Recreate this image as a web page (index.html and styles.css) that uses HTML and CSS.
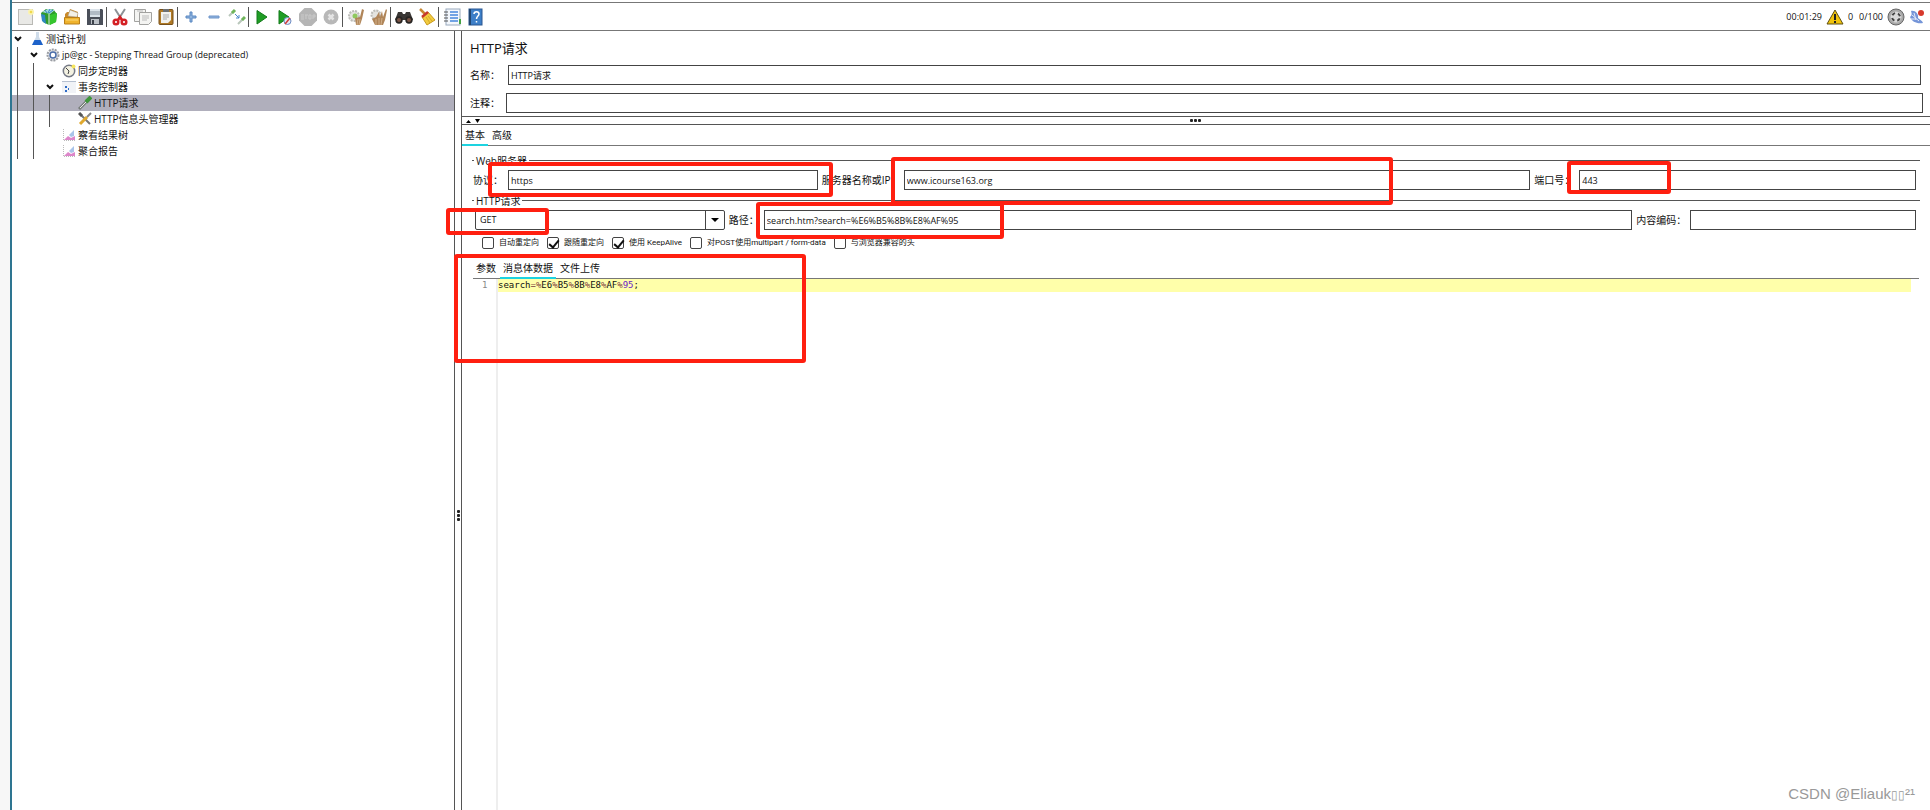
FILE: index.html
```html
<!DOCTYPE html>
<html lang="zh-CN">
<head>
    <meta charset="UTF-8">
    <meta name="viewport" content="width=device-width, initial-scale=1.0">
    <title>HTTP请求</title>
    <link rel="stylesheet" href="styles.css">
</head>
<body>
    <div class="window">
        <!-- Toolbar -->
        <header class="toolbar">
            <button class="tool" aria-label="新建"><svg width="18" height="18" viewBox="0 0 18 18"><rect x="1.5" y="1.5" width="14" height="15" fill="#e9e9e6" stroke="#b9b9b5"/><circle cx="14" cy="4" r="3" fill="#fbf3b0"/><circle cx="14" cy="4" r="1.3" fill="#efd94d"/></svg></button>
            <button class="tool" aria-label="模板"><svg width="18" height="18" viewBox="0 0 18 18"><path d="M1 5l5-4 3 1 4-1 4 5-1 8-7 3-6-3z" fill="#2f9a2c"/><path d="M1 6l4 1 1 9-4-3z" fill="#2f87c4"/><path d="M2 4l6-3 7 1-5 4z" fill="#a5d9dd"/><path d="M5 2l2 3M10 1l-2 4M13 2l-4 3" stroke="#2f87c4"/><path d="M10 7l7-2-1 9-6 3z" fill="#35c52e"/><path d="M9 6v11" stroke="#e3f4e0"/></svg></button>
            <button class="tool" aria-label="打开"><svg width="18" height="18" viewBox="0 0 18 18"><path d="M2 9V6l2-2h2l1-3 8 3v5z" fill="#c98a2c"/><path d="M5 8l2-6 8 3-1 4z" fill="#f3f0e6" stroke="#a7a294" stroke-width=".5"/><path d="M1.500 9.500h15V16h-15z" fill="#f0b32c" stroke="#b97e18"/><path d="M3 12h12" stroke="#fbd97b"/></svg></button>
            <button class="tool" aria-label="保存"><svg width="18" height="18" viewBox="0 0 18 18"><path d="M1 1h15l1 1v15H1z" fill="#4a4f59"/><path d="M4 1h10v8H4z" fill="#dbe3ea"/><path d="M4 4h10M4 6h10" stroke="#8793a0"/><path d="M5 11h8v5H5z" fill="#bcc1c7"/><path d="M6 12h2v4H6z" fill="#3d424b"/></svg></button>
            <span class="sep"></span>
            <button class="tool" aria-label="剪切"><svg width="18" height="18" viewBox="0 0 18 18"><path d="M4 1l7 11M14 1L7 12" stroke="#8d9296" stroke-width="2"/><g fill="none" stroke="#d42025" stroke-width="2.5"><circle cx="5" cy="14" r="2.300"/><circle cx="13" cy="14" r="2.300"/><path d="M7 12l2-3 2 3"/></g></svg></button>
            <button class="tool" aria-label="复制"><svg width="18" height="18" viewBox="0 0 18 18"><g fill="#f4f4f2" stroke="#a2a2a0"><path d="M.5 1.500h11v12H.5z"/><path d="M5.500 4.500h12v9l-3 3h-9z"/></g><path d="M8 8h7M8 10h7M8 12h5M3 3h6" stroke="#bbb"/></svg></button>
            <button class="tool" aria-label="粘贴"><svg width="18" height="18" viewBox="0 0 18 18"><rect x="2" y="1.500" width="14" height="15" rx="1" fill="#b07a26" stroke="#77501a"/><path d="M4 4h10v8l-3 3H4z" fill="#f1f1ee"/><path d="M6 1h6v3H6z" fill="#6d7073"/><path d="M6 7h6M6 9h6M6 11h4" stroke="#aaa"/></svg></button>
            <span class="sep"></span>
            <button class="tool" aria-label="展开"><svg width="18" height="18" viewBox="0 0 18 18"><path d="M8 4h2v4h4v2h-4v4H8v-4H4V8h4z" fill="#8fb3dd" stroke="#5b88c2"/></svg></button>
            <button class="tool" aria-label="折叠"><svg width="18" height="18" viewBox="0 0 18 18"><path d="M4 8h10v2H4z" fill="#8fb3dd" stroke="#6f95ca"/></svg></button>
            <button class="tool" aria-label="启用"><svg width="18" height="18" viewBox="0 0 18 18"><path d="M1 8l5-5M10 16l5-5" stroke="#b9c7bb" stroke-width="2"/><path d="M4 5l3-3M14 12l3-3" stroke="#6fb55a" stroke-width="3"/><path d="M7 6l4 4M11 7v3H8" stroke="#4b86cb" fill="none"/></svg></button>
            <span class="sep"></span>
            <button class="tool" aria-label="启动"><svg width="18" height="18" viewBox="0 0 18 18"><path d="M4 2.500l10 6.500-10 7z" fill="#1f9d24" stroke="#137a1a"/></svg></button>
            <button class="tool" aria-label="无间断启动"><svg width="18" height="18" viewBox="0 0 18 18"><path d="M3 2.500l10 6.500-10 7z" fill="#1f9d24" stroke="#137a1a"/><circle cx="11.500" cy="13" r="3.500" fill="#e5ebf5" stroke="#6d8cc4"/><path d="M9 16l5-6" stroke="#d23c3c" stroke-width="1.500"/></svg></button>
            <button class="tool" aria-label="停止" disabled><svg width="18" height="18" viewBox="0 0 18 18"><path d="M5.500 0h7L18 5.500v7L12.500 18h-7L0 12.500v-7z" fill="#b5b5b5"/><path d="M2 7h3M2 9h3M2 11h3M7 7v4M6 7h3M10 7h2v4h-2zM14 11V7h2v2h-2" fill="none" stroke="#cacaca"/></svg></button>
            <button class="tool" aria-label="关闭" disabled><svg width="18" height="18" viewBox="0 0 18 18"><circle cx="9" cy="9" r="7.500" fill="#b8b8b8"/><path d="M6.500 6.500l5 5M11.500 6.500l-5 5" stroke="#e4e4e4" stroke-width="2.500"/></svg></button>
            <span class="sep"></span>
            <button class="tool" aria-label="清除"><svg width="18" height="18" viewBox="0 0 18 18"><circle cx="7" cy="8" r="5" fill="#e4e4e1" stroke="#bdbdb9" stroke-width="2" stroke-dasharray="2 1"/><circle cx="8" cy="8" r="2.500" fill="#8fc95e"/><path d="M8 10l5-1 2-8 2 1-2 9-2 6H9z" fill="#b08559"/><path d="M11 11l-1 6M13 11l-1 6" stroke="#e0c39e" stroke-width=".7"/></svg></button>
            <button class="tool" aria-label="清除全部"><svg width="18" height="18" viewBox="0 0 18 18"><circle cx="6" cy="7" r="4.500" fill="#e4e4e1" stroke="#bdbdb9" stroke-width="2" stroke-dasharray="2 1"/><path d="M2 11l4-2 3-5 1 5 2-6 1 6 3-8 1 1-2 10-2 5H5z" fill="#b08559"/><path d="M6 11v6M9 10v7M12 10l-1 7" stroke="#e0c39e" stroke-width=".7"/></svg></button>
            <span class="sep"></span>
            <button class="tool" aria-label="查找"><svg width="18" height="18" viewBox="0 0 18 18"><path d="M3 4h4l1 2h2l1-2h4l3 8H0z" fill="#3a3735"/><circle cx="4" cy="12" r="3.700" fill="#282523"/><circle cx="14" cy="12" r="3.700" fill="#282523"/><circle cx="4" cy="12" r="2" fill="#7b5546"/><circle cx="14" cy="12" r="2" fill="#7b5546"/></svg></button>
            <button class="tool" aria-label="重置查找"><svg width="18" height="18" viewBox="0 0 18 18"><path d="M2 1l5 5" stroke="#c88732" stroke-width="2.500"/><path d="M4 9l6-5 7 8-8 5z" fill="#f2cc3f" stroke="#c99a1d"/><path d="M4 9l6-5" stroke="#c6382c" stroke-width="2.500"/><path d="M8 9l4 6M10 8l4 5" stroke="#c99a1d" stroke-width=".7"/></svg></button>
            <span class="sep"></span>
            <button class="tool" aria-label="函数助手"><svg width="18" height="18" viewBox="0 0 18 18"><rect x="3" y="1" width="14" height="16" fill="#f3f7fc" stroke="#9aaabd"/><path d="M7 4h8M7 7h8M7 10h8M7 13h8" stroke="#4788db" stroke-width="1.500"/><path d="M1 4h4M1 7h4M1 10h4M1 13h4" stroke="#555"/><path d="M16 11h2v5h-2z" fill="#45a243"/></svg></button>
            <button class="tool" aria-label="帮助"><svg width="18" height="18" viewBox="0 0 18 18"><rect x="3" y="1" width="13" height="16" fill="#3d7fc8" stroke="#2a5791"/><path d="M3 1h2v16H3z" fill="#23466f"/><path d="M8 6c0-3 5-3 5 0 0 2-2.500 2-2.500 5M10.500 13v1.500" fill="none" stroke="#fff" stroke-width="1.500"/></svg></button>

            <div class="status">
                <span>00:01:29</span>
                <svg width="18" height="16" viewBox="0 0 18 16"><path d="M9 1l8 14H1z" fill="#f0c30c" stroke="#5f5012"/><path d="M9 5v6M9 12v2" stroke="#222" stroke-width="2"/></svg>
                <span>0</span>
                <span class="threads">0/100</span>
                <svg width="18" height="18" viewBox="0 0 18 18"><circle cx="9" cy="9" r="8" fill="#a9a9a9" stroke="#666"/><circle cx="9" cy="9" r="5.500" fill="#d9d9d9"/><circle cx="9" cy="9" r="4" fill="none" stroke="#444" stroke-width="2" stroke-dasharray="3.300 3" stroke-dashoffset="-1.500"/></svg>
                <svg width="16" height="16" viewBox="0 0 16 16"><path d="M2 2c1 3 1 4-1 6 2 5 7 7 13 6-1-3-3-3-5-5 1-4-3-8-7-7z" fill="#7595d8"/><path d="M3 6l7 6M5 4l2 7M2 10h5" stroke="#e4e9f8"/><circle cx="12" cy="4" r="3" fill="#d7392c"/></svg>
            </div>
        </header>

        <main class="workspace">
            <!-- Test plan tree -->
            <nav class="tree">
                <ul>
                    <li>
                        <div class="node"><svg class="arrow" width="8" height="8" viewBox="0 0 8 8"><path d="M1 2l3 3 3-3" fill="none" stroke="#111" stroke-width="2"/></svg><svg class="icon" width="14" height="14" viewBox="0 0 14 14"><path d="M6 0h3v5l4 8H2l4-8z" fill="#cfdcea"/><path d="M4.500 8h6l2.500 5H2z" fill="#1d62c9"/></svg>测试计划</div>
                        <ul>
                            <li>
                                <div class="node latin"><svg class="arrow" width="8" height="8" viewBox="0 0 8 8"><path d="M1 2l3 3 3-3" fill="none" stroke="#111" stroke-width="2"/></svg><svg class="icon" width="14" height="14" viewBox="0 0 14 14"><circle cx="7" cy="7" r="5.500" fill="#e4e6e9" stroke="#9a9da3" stroke-width="2" stroke-dasharray="2 1"/><circle cx="7" cy="7" r="3" fill="#fff" stroke="#4a6da8" stroke-width="1.500"/></svg>jp@gc - Stepping Thread Group (deprecated)</div>
                                <ul>
                                    <li><div class="node leaf"><svg class="icon" width="14" height="14" viewBox="0 0 14 14"><circle cx="7" cy="7" r="5.700" fill="#f4f2e2" stroke="#777b87" stroke-width="1.500"/><path d="M4 4l3 3-1 3" fill="none" stroke="#444"/><circle cx="11.500" cy="2.500" r="2" fill="#f6e65f"/></svg>同步定时器</div></li>
                                    <li>
                                        <div class="node"><svg class="arrow" width="8" height="8" viewBox="0 0 8 8"><path d="M1 2l3 3 3-3" fill="none" stroke="#111" stroke-width="2"/></svg><svg class="icon" width="14" height="14" viewBox="0 0 14 14"><path d="M0 1.500h14V13H0z" fill="#f1f3f7"/><path d="M0 1.500h14" stroke="#b6c0d0"/><path d="M3 6h2v2H3zM3 10h2v2H3zM6 6h1M6 8h1v2H6z" fill="#2d6bc7"/></svg>事务控制器</div>
                                        <ul>
                                            <li><div class="node leaf selected"><svg class="icon" width="14" height="14" viewBox="0 0 14 14"><path d="M1 13l8-8" stroke="#777d79" stroke-width="3"/><path d="M2 12l6-6" stroke="#e6e9e6"/><path d="M8 6l5-5" stroke="#3f963b" stroke-width="4"/></svg>HTTP请求</div></li>
                                            <li><div class="node leaf"><svg class="icon" width="14" height="14" viewBox="0 0 14 14"><path d="M2 2l10 10" stroke="#777" stroke-width="2"/><path d="M1 1l3 3" stroke="#555" stroke-width="3"/><path d="M2 12l7-7" stroke="#e0a92e" stroke-width="3"/><path d="M9 5l4-4" stroke="#888" stroke-width="2"/></svg>HTTP信息头管理器</div></li>
                                        </ul>
                                    </li>
                                    <li><div class="node leaf"><svg class="icon" width="14" height="14" viewBox="0 0 14 14"><path d="M1.500 1v11.500H13" fill="none" stroke="#bbb" stroke-dasharray="1 1"/><path d="M2 12l4-4 3 2 4-2v4z" fill="#dd86ca"/><path d="M7 7l5-5v6l-3 1z" fill="#a9c4ea"/></svg>察看结果树</div></li>
                                    <li><div class="node leaf"><svg class="icon" width="14" height="14" viewBox="0 0 14 14"><path d="M1.500 1v11.500H13" fill="none" stroke="#bbb" stroke-dasharray="1 1"/><path d="M2 12l4-4 3 2 4-2v4z" fill="#dd86ca"/><path d="M7 7l5-5v6l-3 1z" fill="#a9c4ea"/></svg>聚合报告</div></li>
                                </ul>
                            </li>
                        </ul>
                    </li>
                </ul>
            </nav>
            <div class="divider"><i></i><i></i><i></i></div>

            <!-- HTTP request settings -->
            <section class="editor">
                <h1>HTTP请求</h1>
                <div class="row name-row">
                    <label for="name">名称：</label>
                    <input type="text" id="name" value="HTTP请求">
                </div>
                <div class="row comment-row">
                    <label for="comment">注释：</label>
                    <input type="text" id="comment">
                </div>
                <div class="splitter">
                    <svg width="14" height="4" viewBox="0 0 14 4"><path d="M0 4l2.500-3L5 4zM9 0h5l-2.500 4z" fill="#000"/></svg>
                    <span class="dots"><i></i><i></i><i></i></span>
                </div>
                <div class="tabs">
                    <button class="tab active">基本</button>
                    <button class="tab">高级</button>
                </div>

                <div class="groups">
                    <div class="group">
                        <div class="legend">Web服务器</div>
                        <div class="row">
                            <label class="lead" for="protocol">协议：</label>
                            <div class="field protocol"><input type="text" id="protocol" value="https"><span class="mark"></span></div>
                            <label class="server-label" for="server">服务器名称或IP：</label>
                            <div class="field server"><input type="text" id="server" value="www.icourse163.org"><span class="mark"></span></div>
                            <label class="port-label" for="port">端口号：</label>
                            <div class="field port"><input type="text" id="port" value="443"><span class="mark"></span></div>
                        </div>
                    </div>

                    <div class="group">
                        <div class="legend">HTTP请求</div>
                        <div class="row">
                            <div class="field method">
                                <select aria-label="方法"><option>GET</option><option>POST</option></select>
                                <svg class="drop" width="19" height="18" viewBox="0 0 19 18"><path d="M.5 0v18" stroke="#444"/><path d="M6 7h8l-4 4z" fill="#000"/></svg>
                                <span class="mark"></span>
                            </div>
                            <label class="path-label" for="path">路径：</label>
                            <div class="field path"><input type="text" id="path" value="search.htm?search=%E6%B5%8B%E8%AF%95"><span class="mark"></span></div>
                            <label class="encoding-label" for="encoding">内容编码：</label>
                            <div class="field encoding"><input type="text" id="encoding"></div>
                        </div>
                        <div class="checks">
                            <label><input type="checkbox">自动重定向</label>
                            <label><input type="checkbox" checked>跟随重定向</label>
                            <label><input type="checkbox" checked>使用 KeepAlive</label>
                            <label><input type="checkbox">对POST使用multipart / form-data</label>
                            <label><input type="checkbox">与浏览器兼容的头</label>
                        </div>
                    </div>
                </div>

                <div class="body-data">
                    <span class="mark"></span>
                    <div class="tabs">
                        <button class="tab">参数</button>
                        <button class="tab active">消息体数据</button>
                        <button class="tab">文件上传</button>
                    </div>
                    <div class="code">
                        <div class="gutter">1</div>
                        <code>search<b>=%</b>E6<b>%</b>B5<b>%</b>8B<b>%</b>E8<b>%</b>AF<b>%</b><em>95</em>;</code>
                    </div>
                </div>
            </section>
        </main>
        <div class="watermark">CSDN @Eliauk<span>▯▯</span>²¹</div>
    </div>
</body>
</html>
```

FILE: styles.css
```css
* {
    box-sizing: border-box;
}

body {
    margin: 0;
    padding-left: 10px;
    background-color: #f7f7f7;
    font-family: "Open Sans", "Noto Sans CJK SC", sans-serif;
    font-size: 10px;
    line-height: 16px;
    color: #111;
}

ul {
    margin: 0;
    padding: 0;
    list-style: none;
}

button, input, select {
    font: inherit;
    color: inherit;
}

.window {
    position: relative;
    display: flex;
    flex-direction: column;
    min-height: 100vh;
    padding-top: 2px;
    border-left: 2px solid #2e7591;
    background-color: #fff;
    overflow: hidden;
}

/* Toolbar */
.toolbar {
    display: flex;
    align-items: center;
    height: 29px;
    padding: 0 5px 0 2px;
    border-top: 1px solid #777;
    border-bottom: 1px solid #777;
}

.tool {
    display: flex;
    align-items: center;
    justify-content: center;
    width: 23px;
    height: 26px;
    padding: 0;
    border: none;
    background: none;
}

.sep {
    width: 1px;
    height: 20px;
    margin-right: 1px;
    background-color: #555;
}

.status {
    display: flex;
    align-items: center;
    gap: 4px;
    margin-left: auto;
    font-size: 9px;
}

.threads {
    margin-left: 2px;
}

/* Main panes */
.workspace {
    display: flex;
    flex: 1;
}

.tree {
    flex: 0 0 442px;
    overflow: hidden;
    isolation: isolate;
}

.node {
    display: flex;
    align-items: center;
    height: 16px;
    white-space: nowrap;
}

.latin {
    font-size: 9px;
}

.arrow {
    margin: 0 8px 0 2px;
}

.icon {
    margin-right: 2px;
}

.leaf {
    padding-left: 18px;
}

/* each level is indented 16px, with a guide line under its arrow */
.tree ul ul {
    margin-left: 5px;
    padding-left: 10px;
    border-left: 1px solid #555;
}

.selected {
    position: relative;
}

/* the selection bar runs the whole width of the tree, behind the guides */
.selected::before {
    content: "";
    position: absolute;
    inset: 0 0 0 -60px;
    z-index: -1;
    background-color: #b0afbc;
}

.divider {
    display: flex;
    flex-direction: column;
    align-items: center;
    justify-content: center;
    gap: 1px;
    flex: 0 0 8px;
    padding-top: 190px;
    border-left: 1px solid #555;
    border-right: 1px solid #555;
}

.divider i, .dots i {
    width: 3px;
    height: 3px;
    border-radius: 1px;
    background-color: #222;
}

/* Editor */
.editor {
    display: flex;
    flex-direction: column;
    flex: 1;
    min-width: 0;
}

h1 {
    margin: 0;
    padding: 8px;
    font-size: 13px;
    font-weight: normal;
    line-height: 18px;
}

.row {
    display: flex;
    align-items: center;
    white-space: nowrap;
}

input[type="text"], select {
    display: block;
    width: 100%;
    height: 20px;
    padding: 0 2px;
    border: 1px solid #444;
    border-radius: 0;
    background-color: #fff;
    font-size: 9px;
    outline: none;
}

.name-row {
    padding: 0 9px 8px 8px;
}

.comment-row {
    padding: 0 7px 3px 8px;
}

.name-row label {
    flex: 0 0 38px;
}

.comment-row label {
    flex: 0 0 36px;
}

.splitter {
    display: flex;
    align-items: center;
    height: 9px;
    padding: 0 20px 0 4px;
    border-top: 1px solid #555;
    border-bottom: 1px solid #555;
}

.dots {
    display: flex;
    gap: 1px;
    margin: 0 auto;
}

.tabs {
    display: flex;
    gap: 1px;
    height: 21px;
    border-bottom: 1px solid #777;
}

.tab {
    height: 21px;
    padding: 0 3px;
    border: none;
    border-bottom: 2px solid transparent;
    background: none;
}

.tab.active {
    border-bottom-color: #1dd3e0;
}

.groups {
    padding: 4px 14px 0 11px;
}

.legend {
    display: flex;
    align-items: center;
    gap: 2px;
    height: 20px;
    margin: 0 -4px 0 -1px;
    padding-top: 1px;
}

.legend::before, .legend::after {
    content: "";
    width: 2px;
    height: 1px;
    background-color: #555;
}

.legend::after {
    flex: 1;
}

.field {
    position: relative;
    flex: 1 1 0;
    min-width: 0;
}

.lead {
    flex: 0 0 35px;
}

.server-label {
    flex: 0 0 86px;
    padding-left: 4px;
}

.port-label {
    flex: 0 0 49px;
    padding-left: 4px;
}

.path-label {
    flex: 0 0 39px;
    padding-left: 4px;
}

.encoding-label {
    flex: 0 0 58px;
    padding-left: 4px;
}

.protocol {
    flex-grow: 310;
}

.server {
    flex-grow: 627;
}

.port {
    flex-grow: 337;
}

.method {
    flex-grow: 250;
    margin-left: 2px;
}

.path {
    flex-grow: 869;
}

.encoding {
    flex-grow: 226;
}

select {
    appearance: none;
    padding-left: 4px;
    border-radius: 2px;
}

.drop {
    position: absolute;
    top: 1px;
    right: 1px;
    pointer-events: none;
}

.checks {
    display: flex;
    gap: 8px;
    padding: 7px 9px;
    font-family: Roboto, "Noto Sans CJK SC", sans-serif;
    font-size: 8px;
    line-height: 12px;
}

.checks label {
    display: flex;
    align-items: center;
    gap: 5px;
    white-space: nowrap;
}

input[type="checkbox"] {
    appearance: none;
    width: 12px;
    height: 12px;
    margin: 0;
    border: 1px solid #444;
    border-radius: 2px;
    background-color: #fff;
}

input[type="checkbox"]:checked::before {
    content: "";
    display: block;
    width: 4px;
    height: 8px;
    margin: 0 3px;
    border: solid #111;
    border-width: 0 2px 2px 0;
    transform: rotate(40deg);
}

/* Request body */
.body-data {
    position: relative;
    display: flex;
    flex-direction: column;
    flex: 1;
    padding: 2px 11px 0;
}

.code {
    display: flex;
    flex: 1;
    font-family: "DejaVu Sans Mono", monospace;
    font-size: 9px;
    line-height: 13px;
}

.gutter {
    flex: 0 0 25px;
    padding-left: 9px;
    border-right: 2px solid #eee;
    color: #888;
}

code {
    flex: 1;
    height: 13px;
    margin-right: 8px;
    background-color: #ffffaa;
    font-family: inherit;
}

code b {
    font-weight: normal;
    color: #804040;
}

code em {
    font-style: normal;
    color: #6a22c9;
}

/* Red highlight frames */
.mark {
    position: absolute;
    z-index: 1;
    border: 4px solid #ff1f10;
    border-radius: 3px;
    pointer-events: none;
}

.protocol .mark {
    inset: -8px -15px -7px -20px;
}

.server .mark {
    top: -13px;
    left: -13px;
    width: 502px;
    height: 48px;
}

.port .mark {
    top: -9px;
    left: -12px;
    width: 104px;
    height: 33px;
}

.method .mark {
    top: -2px;
    left: -29px;
    width: 103px;
    height: 27px;
}

.path .mark {
    top: -8px;
    left: -8px;
    width: 248px;
    height: 37px;
}

.body-data .mark {
    top: -2px;
    left: -8px;
    width: 352px;
    height: 109px;
}

.watermark {
    position: absolute;
    right: 15px;
    bottom: 6px;
    font-family: "Liberation Sans", sans-serif;
    font-size: 15px;
    line-height: 18px;
    color: #999;
}

.watermark span {
    font-size: 12px;
}
```
